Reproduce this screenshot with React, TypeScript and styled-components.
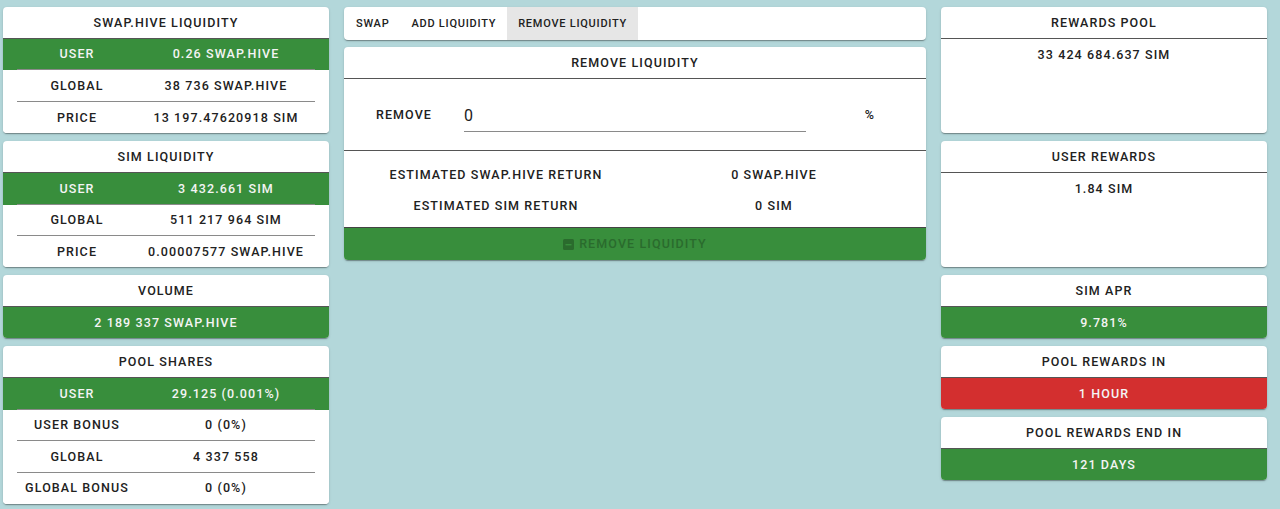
import React from "react";
import styled, { createGlobalStyle } from "styled-components";

const GlobalStyle = createGlobalStyle`
	html, body {
		margin: 0;
		padding: 0;
		background: #b3d7da;
		font-family: Roboto, "Liberation Sans", sans-serif;
		color: #212121;
	}
	* {
		box-sizing: border-box;
	}
`;

type Tone = "green" | "red" | "white";

const toneBg = (t?: Tone) =>
	t === "green" ? "#388e3c" : t === "red" ? "#d32f2f" : "#fff";

const Page = styled.div`
	display: grid;
	grid-template-columns: 326px 582px 326px;
	column-gap: 15px;
	padding: 7px 3px 4px;
	align-items: start;
`;

const Column = styled.div<{ $gap?: number }>`
	display: flex;
	flex-direction: column;
	gap: ${(p) => p.$gap ?? 8}px;
`;

const Card = styled.div<{ $height?: number }>`
	background: #fff;
	border-radius: 4px;
	box-shadow: 0 2px 1px -1px rgba(0, 0, 0, 0.2), 0 1px 1px 0 rgba(0, 0, 0, 0.14),
		0 1px 3px 0 rgba(0, 0, 0, 0.12);
	overflow: hidden;
	${(p) => (p.$height ? `height: ${p.$height}px;` : "")}
`;

const Label = styled.span`
	font-size: 12.5px;
	font-weight: 500;
	letter-spacing: 1.1px;
	text-transform: uppercase;
	line-height: 1;
	white-space: nowrap;
	padding-top: 1px;
`;

const CardHeader = styled.div`
	height: 32px;
	display: flex;
	align-items: center;
	justify-content: center;
	border-bottom: 1px solid #555;
`;

const Row = styled.div<{ $tone?: Tone }>`
	background: ${(p) => toneBg(p.$tone)};
	color: ${(p) => (p.$tone && p.$tone !== "white" ? "#f4f4f4" : "#212121")};
	padding: 0 14px;
`;

const RowInner = styled.div<{ $last?: boolean }>`
	display: grid;
	grid-template-columns: 120px 1fr;
	height: 31.4px;
	align-items: center;
	justify-items: center;
	border-bottom: ${(p) => (p.$last ? "none" : "1px solid #8a8a8a")};
`;

const Banner = styled.div<{ $tone: Tone }>`
	height: 31px;
	background: ${(p) => toneBg(p.$tone)};
	color: #f4f4f4;
	display: flex;
	align-items: center;
	justify-content: center;
`;

const PlainValue = styled.div`
	height: 31px;
	display: flex;
	align-items: center;
	justify-content: center;
`;

const Tabs = styled(Card)`
	display: flex;
	height: 33px;
`;

const Tab = styled.div<{ $active?: boolean }>`
	padding: 0 11px;
	display: flex;
	align-items: center;
	background: ${(p) => (p.$active ? "#e6e6e6" : "transparent")};
	font-size: 11px;
	font-weight: 500;
	letter-spacing: 0.75px;
	text-transform: uppercase;
	color: #212121;

	&:first-child {
		padding-left: 12px;
	}
`;

const FormRow = styled.div`
	display: grid;
	grid-template-columns: 88px 342px 1fr;
	column-gap: 16px;
	align-items: center;
	height: 72px;
	padding: 0 8px 0 16px;
	border-bottom: 1px solid #555;
	justify-items: center;
`;

const AmountInput = styled.input`
	justify-self: stretch;
	border: none;
	border-bottom: 1px solid #8a8a8a;
	height: 32px;
	margin-top: 2px;
	padding: 0;
	font-family: Roboto, "Liberation Sans", sans-serif;
	font-size: 16px;
	color: #212121;
	outline: none;
	background: transparent;
`;

const Estimates = styled.div`
	padding: 8px 13px 6px;
`;

const EstimateRow = styled.div`
	display: grid;
	grid-template-columns: 1fr 1fr;
	height: 31px;
	align-items: center;
	justify-items: center;
`;

const ActionButton = styled.button`
	width: 100%;
	height: 33px;
	border: none;
	border-top: 1px solid #444;
	background: #388e3c;
	color: #2a6b2d;
	display: flex;
	align-items: center;
	justify-content: center;
	gap: 5px;
	font-family: Roboto, "Liberation Sans", sans-serif;
	cursor: default;
	padding: 0;
`;

const MinusBox = () => (
	<svg width="11" height="11" viewBox="0 0 11 11">
		<rect x="0" y="0" width="11" height="11" rx="1.5" fill="#2a6b2d" />
		<rect x="2.5" y="5" width="6" height="1.4" fill="#388e3c" />
	</svg>
);

interface IStat {
	label: string;
	value: string;
	tone?: Tone;
}

const StatCard = ({ title, rows }: { title: string; rows: IStat[] }) => (
	<Card>
		<CardHeader>
			<Label>{title}</Label>
		</CardHeader>
		{rows.map((r, i) => (
			<Row key={r.label} $tone={r.tone}>
				<RowInner $last={i === rows.length - 1}>
					<Label>{r.label}</Label>
					<Label>{r.value}</Label>
				</RowInner>
			</Row>
		))}
	</Card>
);

const BannerCard = ({ title, value, tone }: { title: string; value: string; tone: Tone }) => (
	<Card>
		<CardHeader>
			<Label>{title}</Label>
		</CardHeader>
		<Banner $tone={tone}>
			<Label>{value}</Label>
		</Banner>
	</Card>
);

const InfoCard = ({ title, value }: { title: string; value: string }) => (
	<Card $height={126}>
		<CardHeader>
			<Label>{title}</Label>
		</CardHeader>
		<PlainValue>
			<Label>{value}</Label>
		</PlainValue>
	</Card>
);

const App = () => {
	return (
		<>
			<GlobalStyle />
			<Page>
				<Column>
					<StatCard
						title="SWAP.HIVE Liquidity"
						rows={[
							{ label: "User", value: "0.26 SWAP.HIVE", tone: "green" },
							{ label: "Global", value: "38 736 SWAP.HIVE" },
							{ label: "Price", value: "13 197.47620918 SIM" },
						]}
					/>
					<StatCard
						title="SIM Liquidity"
						rows={[
							{ label: "User", value: "3 432.661 SIM", tone: "green" },
							{ label: "Global", value: "511 217 964 SIM" },
							{ label: "Price", value: "0.00007577 SWAP.HIVE" },
						]}
					/>
					<BannerCard title="Volume" value="2 189 337 SWAP.HIVE" tone="green" />
					<StatCard
						title="Pool Shares"
						rows={[
							{ label: "User", value: "29.125 (0.001%)", tone: "green" },
							{ label: "User Bonus", value: "0 (0%)" },
							{ label: "Global", value: "4 337 558" },
							{ label: "Global Bonus", value: "0 (0%)" },
						]}
					/>
				</Column>

				<Column $gap={7}>
					<Tabs>
						<Tab>Swap</Tab>
						<Tab>Add Liquidity</Tab>
						<Tab $active>Remove Liquidity</Tab>
					</Tabs>
					<Card>
						<CardHeader>
							<Label>Remove Liquidity</Label>
						</CardHeader>
						<FormRow>
							<Label>Remove</Label>
							<AmountInput defaultValue="0" />
							<Label>%</Label>
						</FormRow>
						<Estimates>
							<EstimateRow>
								<Label>Estimated SWAP.HIVE Return</Label>
								<Label>0 SWAP.HIVE</Label>
							</EstimateRow>
							<EstimateRow>
								<Label>Estimated SIM Return</Label>
								<Label>0 SIM</Label>
							</EstimateRow>
						</Estimates>
						<ActionButton disabled>
							<MinusBox />
							<Label>Remove Liquidity</Label>
						</ActionButton>
					</Card>
				</Column>

				<Column>
					<InfoCard title="Rewards Pool" value="33 424 684.637 SIM" />
					<InfoCard title="User Rewards" value="1.84 SIM" />
					<BannerCard title="SIM APR" value="9.781%" tone="green" />
					<BannerCard title="Pool Rewards In" value="1 Hour" tone="red" />
					<BannerCard title="Pool Rewards End In" value="121 Days" tone="green" />
				</Column>
			</Page>
		</>
	);
};

export default App;
